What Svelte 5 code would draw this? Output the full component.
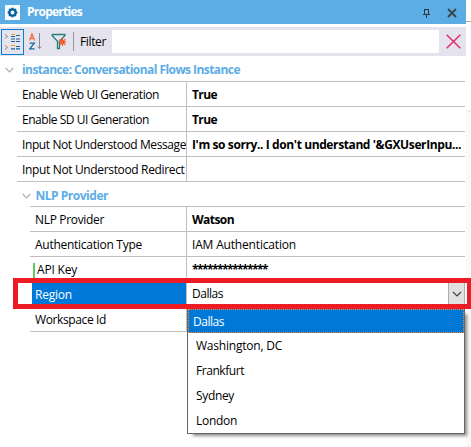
<script>
  const general = [
    { name: 'Enable Web UI Generation', nw: 137, value: 'True', vw: 25, bold: true },
    { name: 'Enable SD UI Generation', nw: 127, value: 'True', vw: 25, bold: true },
    { name: 'Input Not Understood Message', nw: 164, value: "I'm so sorry.. I don't understand '&GXUserInpu...", vw: 269, bold: true },
    { name: 'Input Not Understood Redirect', nw: 162.5, value: '', vw: 0 }
  ];
  const provider = [
    { name: 'NLP Provider', nw: 69, value: 'Watson', vw: 42, bold: true },
    { name: 'Authentication Type', nw: 107, value: 'IAM Authentication', vw: 104 },
    { name: 'API Key', nw: 40, value: '***************', vw: 75, bold: true, modified: true },
    { name: 'Region', nw: 37, value: 'Dallas', vw: 31, active: true },
    { name: 'Workspace Id', nw: 71, value: '', vw: 0 }
  ];
  const options = [
    { label: 'Dallas', w: 31 },
    { label: 'Washington, DC', w: 86 },
    { label: 'Frankfurt', w: 48 },
    { label: 'Sydney', w: 38 },
    { label: 'London', w: 41 }
  ];

  // Spreads the letters so the label takes the given width.
  function fit(node, width) {
    if (!width) return;
    const natural = node.getBoundingClientRect().width;
    node.style.letterSpacing = (width - natural) / node.textContent.length + 'px';
  }
</script>

{#snippet row(item)}
  <div class="row" class:active={item.active}>
    <div class="name" class:modified={item.modified}><span class="t" use:fit={item.nw}>{item.name}</span></div>
    <div class="value" class:bold={item.bold}>
      <span class="t" use:fit={item.vw}>{item.value}</span>
      {#if item.active}
        <div class="drop">
          <svg width="10" height="6" viewBox="0 0 10 6"><path d="M1 1l4 4 4-4" fill="none" stroke="#444" stroke-width="1.2" /></svg>
        </div>
      {/if}
    </div>
  </div>
{/snippet}

{#snippet chevron()}
  <svg class="chev" width="9" height="6" viewBox="0 0 9 6"><path d="M.7 1l3.8 3.8L8.300 1" fill="none" stroke="#a8b1b9" stroke-width="1.2" /></svg>
{/snippet}

<div class="window">
  <div class="panel">
    <header>
      <svg width="15" height="15" viewBox="0 0 15 15">
        <rect width="15" height="15" fill="#f8fbff" />
        <g stroke="#08609c" stroke-width="2.4"><path d="M7.500 2.700v9.600M2.700 7.500h9.600M4.100 4.100l6.800 6.800M10.900 4.100l-6.800 6.800" /></g>
        <circle cx="7.500" cy="7.500" r="3.900" fill="#08609c" /><circle cx="7.500" cy="7.500" r="1.900" fill="#f8fbff" />
      </svg>
      <span class="t title" use:fit={55}>Properties</span>
      <svg class="pin" width="8" height="9" viewBox="0 0 8 9" shape-rendering="crispEdges">
        <path d="M1.500 5V.5H5.500V5M0 5.500H7M3.500 6V9" fill="none" stroke="#333" /><path d="M4.500 0h1v5h-1z" fill="#333" />
      </svg>
      <svg class="close" width="10" height="10" viewBox="0 0 10 10"><path d="M1 1l8 8M9 1l-8 8" stroke="#3b454c" stroke-width="1.900" /></svg>
    </header>

    <div class="toolbar">
      <div class="tool on">
        <svg width="17" height="18" viewBox="0 0 17 18">
          <path d="M1 1.500l2.500 2-2.500 2M1 12.500l2.500 2-2.500 2" fill="none" stroke="#888" />
          <path d="M7 1.500h4M7 12.500h4" stroke="#f39a35" />
          <path d="M12 2.500h4M7 3.500h4M7 6h4M12 6h4M7 8.500h4M12 8.500h4M12 13.500h4M7 15.800h4M12 15.800h4" stroke="#17649a" stroke-width="1.200" />
        </svg>
      </div>
      <svg class="sort" width="13" height="17" viewBox="0 0 13 17" fill="none" stroke-width="1.200">
        <path d="M.7 7.500L3 .8l2.500 6.700M1.500 5.300h3.200" stroke="#f26535" />
        <path d="M.7 10.200h4.600L.7 15.800h4.800" stroke="#17649a" />
        <path d="M10.500 0v15.500M8.500 13.500l2 2 2-2" stroke="#8a8a8a" stroke-width="1" />
      </svg>
      <svg class="filter" width="17" height="17" viewBox="0 0 17 17">
        <path d="M1 1.500h13.500M1 1.500v1l5.500 5.700v7.300h2V8.200l5.500-5.700v-1" fill="none" stroke="#277d78" stroke-width="1.300" />
        <path d="M11.500 5v8M7.500 9h8M8.700 6.200l5.600 5.600M14.300 6.200l-5.600 5.600" stroke="#f75b28" stroke-width="1.200" /><circle cx="11.500" cy="9" r="2.300" fill="#f75b28" />
      </svg>
      <i class="sep"></i>
      <span class="t" use:fit={26}>Filter</span>
      <div class="input"></div>
      <svg class="clear" width="15" height="15" viewBox="0 0 15 15"><path d="M.7.700l13.600 13.600M14.300.700L.7 14.300" stroke="#e62562" stroke-width="1.400" /></svg>
    </div>

    <div class="group">{@render chevron()}<span class="t" use:fit={218}>instance: Conversational Flows Instance</span></div>
    <div class="rows">
      {#each general as item}{@render row(item)}{/each}
    </div>
    <div class="group sub">{@render chevron()}<span class="t" use:fit={72.5}>NLP Provider</span></div>
    <div class="rows nested">
      {#each provider as item}{@render row(item)}{/each}
    </div>
  </div>

  <div class="edge"><div class="edge-top"></div><div class="edge-body"></div></div>

  <div class="menu">
    {#each options as option, i}
      <div class="option" class:selected={i === 0}><span class="t" use:fit={option.w}>{option.label}</span></div>
    {/each}
  </div>
  <div class="highlight"></div>
</div>

<style>
  :global(body) { margin: 0; background: #fff; }
  .window {
    position: relative; display: flex; width: 471px; height: 447px; overflow: hidden;
    background: #fff; color: #000; font: 12px/24px "Open Sans", "Noto Sans", sans-serif;
  }
  .window *, .window { box-sizing: border-box; }
  .t { display: inline-block; white-space: nowrap; flex: none; }
  svg { display: block; flex: none; }
  .panel { width: 466px; }
  header { display: flex; align-items: center; height: 24px; padding: 0 9px 0 5px; background: #5cade5; color: #fff; }
  .title { margin-left: 7px; font-weight: 700; }
  .pin { margin-left: auto; margin-right: 16px; margin-top: 2px; }
  .close { margin-top: 2px; }
  .toolbar { display: flex; align-items: center; height: 29px; margin-top: 3px; background: #e5e4ee; }
  .tool { display: flex; align-items: center; justify-content: center; width: 23px; height: 26px; margin-left: 1px; border: 1px solid #0b7bd8; }
  .sort { margin-left: 5px; }
  .filter { margin-left: 9px; }
  .sep { width: 1px; height: 19px; margin: 0 6px 0 5px; background: #96969e; }
  .input { width: 327px; height: 23px; margin-left: 6px; background: #fff; }
  .clear { margin-left: 7px; }
  .group { display: flex; align-items: center; height: 26px; padding: 2px 0 0 5px; color: #5cade5; font-weight: 700; }
  .group .t { margin-left: 8px; }
  .group.sub { height: 25px; padding-left: 22px; }
  .group.sub .t { margin-left: 4.500px; }
  .rows { margin-left: 17px; margin-right: 1px; border-top: 1px solid #bfbfbf; margin-top: -1px; }
  .nested { margin-left: 30px; }
  .row { display: flex; height: 25px; line-height: 26px; border-bottom: 1px solid #bfbfbf; }
  .name { width: 169px; padding-left: 5px; }
  .nested .name { width: 156px; }
  .nested .modified { display: flex; padding-left: 3px; }
  .modified::before { content: ""; width: 2px; height: 18px; margin: 6px 2px 0 0; background: #63ca63; }
  .value { position: relative; flex: 1; display: flex; padding-left: 5px; border-left: 1px solid #bfbfbf; }
  .bold { font-weight: 700; }
  .active .name { margin-left: 2px; width: 154px; padding-left: 3px; background: #0078d7; color: #fff; }
  .active .value { line-height: 24px; }
  .drop { display: flex; align-items: center; justify-content: center; width: 17px; margin-left: auto; background: #e1e1e1; border: 1px solid #adadad; }
  .edge { width: 5px; display: flex; flex-direction: column; }
  .edge-top { height: 22px; border-bottom: 1px solid #a9a9a9; }
  .edge-body { flex: 1; margin-top: 88px; background: #f9f9f9; border-top: 2px solid #eee; }
  .menu {
    position: absolute; left: 187px; top: 308px; width: 278px; height: 126px; border: 1px solid #646464;
    background: #fff; box-shadow: 4px 4px 3px -2px rgba(0, 0, 0, .45);
  }
  .option { height: 25px; padding-left: 8px; line-height: 25px; }
  .selected { height: 24px; padding-left: 4px; background: #0078d7; color: #fff; border: 1px dotted #ff8728; line-height: 23px; }
  .highlight { position: absolute; left: 13px; top: 278px; width: 458px; height: 31px; border: 5px solid #ed1c24; border-right-width: 4px; }
</style>
